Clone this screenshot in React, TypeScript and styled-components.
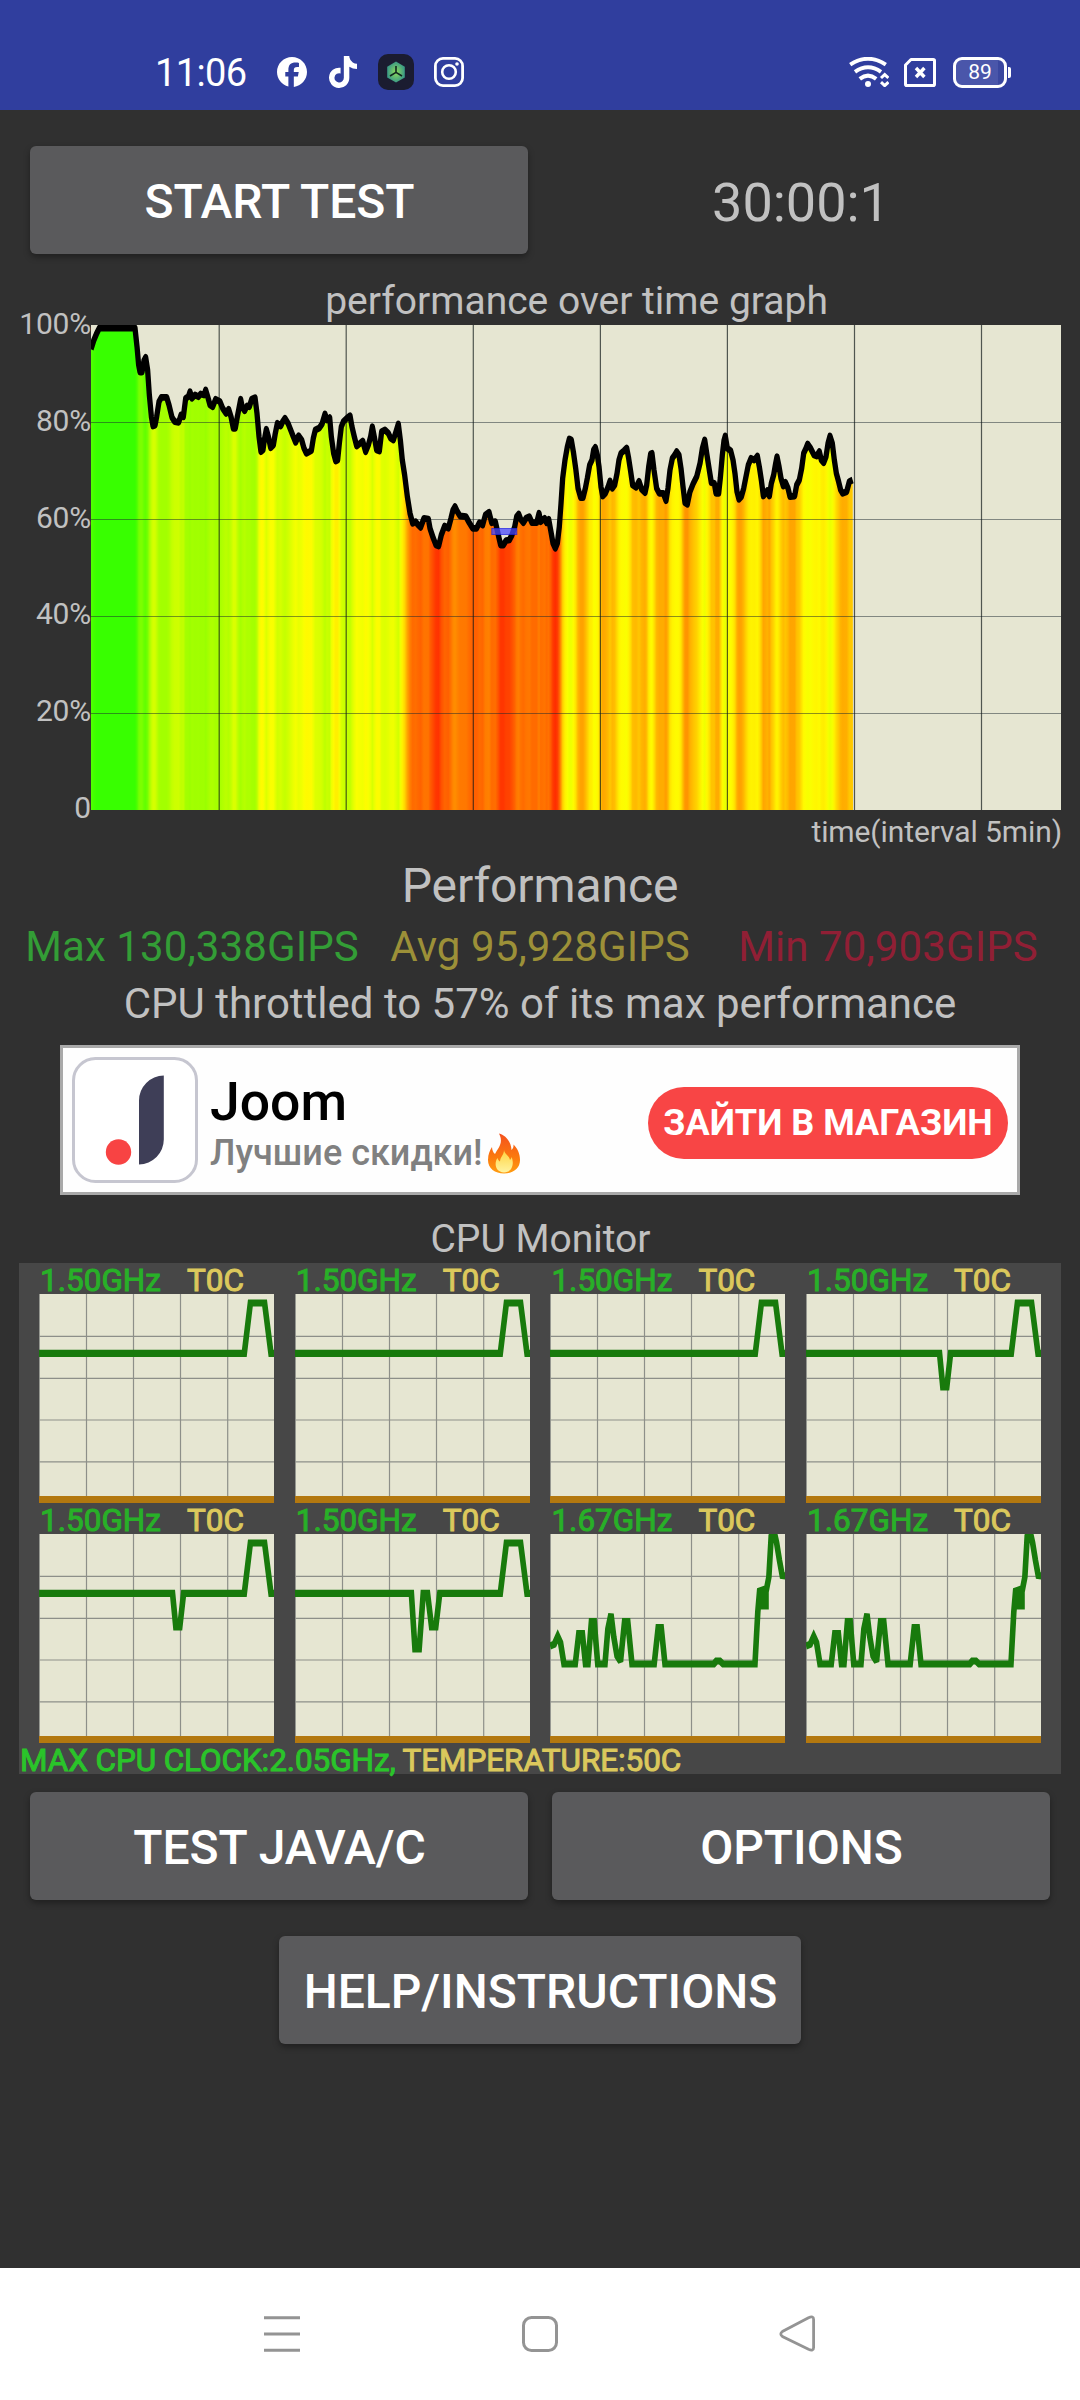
import React from "react";
import styled, { createGlobalStyle } from "styled-components";
import { FaFacebook, FaTiktok } from "react-icons/fa6";

type Point = [number, number];

const GlobalStyle = createGlobalStyle`
  body {
    margin: 0;
    background: #303030;
    font-family: Roboto, "Noto Sans", sans-serif;
  }
`;

const Screen = styled.div`
  display: flex;
  flex-direction: column;
  width: 1080px;
  height: 2400px;
  overflow: hidden;
  background: #303030;
  color: #c1c1c1;
`;

/* ---------- status bar ---------- */

const StatusBar = styled.header`
  display: flex;
  align-items: center;
  justify-content: space-between;
  box-sizing: border-box;
  height: 110px;
  padding: 34px 69px 0 155px;
  background: #303e9e;
  color: #fff;
`;

const StatusGroup = styled.div<{ $gap: number }>`
  display: flex;
  align-items: center;
  gap: ${(p) => p.$gap}px;
  svg {
    display: block;
  }
`;

const Clock = styled.span`
  width: 102px;
  padding-top: 1px;
  font-size: 38px;
  line-height: 44px;
  letter-spacing: -0.6px;
  white-space: nowrap;
`;

const Battery = styled.div`
  display: flex;
  align-items: center;
  gap: 1px;
  margin-left: 2px;
`;

const BatteryBody = styled.div`
  box-sizing: border-box;
  width: 54px;
  height: 31px;
  border: 3px solid #fff;
  border-radius: 9px;
  background: linear-gradient(90deg, #4a56aa 88%, #3a479f 88%);
  font-size: 21px;
  line-height: 25px;
  text-align: center;
`;

const BatteryTip = styled.div`
  width: 3px;
  height: 11px;
  border-radius: 0 2px 2px 0;
  background: #fff;
`;

/* ---------- controls ---------- */

const ButtonRow = styled.div<{ $top: number }>`
  display: grid;
  grid-template-columns: 498px 498px;
  column-gap: 24px;
  justify-content: center;
  margin-top: ${(p) => p.$top}px;
`;

const Button = styled.button<{ $width?: number }>`
  width: ${(p) => p.$width ?? 498}px;
  height: 108px;
  padding: 4px 0 0 1px;
  border: 0;
  border-radius: 6px;
  background: #5a5a5c;
  box-shadow: 0 3px 6px rgba(0, 0, 0, 0.35);
  color: #fff;
  font: 500 48px/56px Roboto, sans-serif;
`;

const Timer = styled.div`
  padding-top: 5px;
  font-size: 54px;
  line-height: 103px;
  text-align: center;
`;

const CenterRow = styled.div`
  display: flex;
  justify-content: center;
  margin-top: 36px;
`;

/* ---------- performance graph ---------- */

const GraphTitle = styled.h2`
  height: 47px;
  margin: 24px 18px 0 91px;
  font-size: 39px;
  font-weight: 400;
  line-height: 46px;
  text-align: center;
`;

const GraphRow = styled.div`
  display: grid;
  grid-template-columns: 91px 970px;
  height: 485px;
`;

const AxisLabels = styled.div`
  display: flex;
  flex-direction: column;
  justify-content: space-between;
  height: 520px;
  margin-top: -19px;
  font-size: 30px;
  line-height: 36px;
  letter-spacing: -0.2px;
  text-align: right;
`;

const GraphSvg = styled.svg`
  display: block;
  width: 970px;
  height: 485px;
  background: #e6e6d2;
`;

const TimeCaption = styled.div`
  height: 44px;
  padding: 4px 18px 0 0;
  font-size: 30px;
  line-height: 36px;
  letter-spacing: -0.1px;
  text-align: right;
`;

/* ---------- results ---------- */

const ResultTitle = styled.h2`
  height: 64px;
  margin: 0;
  font-size: 48px;
  font-weight: 400;
  line-height: 56px;
  letter-spacing: -0.1px;
  text-align: center;
`;

const Scores = styled.div`
  display: grid;
  grid-template-columns: repeat(3, 348px);
  justify-content: center;
  height: 57px;
`;

const Score = styled.span<{ $color: string }>`
  color: ${(p) => p.$color};
  font-size: 42px;
  line-height: 49px;
  letter-spacing: 0.1px;
  text-align: center;
  white-space: nowrap;
`;

const ThrottleNote = styled.p`
  height: 66px;
  margin: 0;
  font-size: 42px;
  line-height: 49px;
  text-align: center;
`;

/* ---------- ad banner ---------- */

const Banner = styled.section`
  display: flex;
  align-items: center;
  box-sizing: border-box;
  width: 960px;
  height: 150px;
  margin: 0 auto;
  padding: 0 9px;
  border: 3px solid #a9a9a9;
  background: #fefefe;
`;

const BannerText = styled.div`
  flex: 1;
  margin-left: 12px;
  padding-top: 7px;
`;

const BannerTitle = styled.div`
  color: #000;
  font-size: 53.5px;
  font-weight: 500;
  line-height: 59px;
`;

const BannerSub = styled.div`
  display: flex;
  align-items: center;
  gap: 4px;
  height: 44px;
  color: #808080;
  font-size: 36px;
  font-weight: 500;
  line-height: 44px;
`;

const BannerAction = styled.div`
  width: 360px;
  height: 72px;
  margin-top: 5px;
  border-radius: 36px;
  background: #f84545;
  color: #fff;
  font-size: 36px;
  font-weight: 700;
  line-height: 73px;
  text-align: center;
  white-space: nowrap;
`;

/* ---------- cpu monitor ---------- */

const MonitorTitle = styled.h2`
  height: 47px;
  margin: 21px 0 0;
  padding-left: 1px;
  font-size: 39px;
  font-weight: 400;
  line-height: 46px;
  text-align: center;
`;

const MonitorPanel = styled.section`
  align-self: center;
  width: 1042px;
  height: 511px;
  background: #474747;
`;

const CoreGrid = styled.div`
  display: grid;
  grid-template-columns: repeat(4, 235px);
  grid-auto-rows: 240px;
  column-gap: 20.7px;
  padding-left: 20px;
`;

const CoreLabel = styled.div`
  display: grid;
  grid-template-columns: 147px auto;
  height: 31px;
  padding-left: 1px;
  font-size: 31.5px;
  line-height: 35px;
  white-space: nowrap;
`;

const Freq = styled.span<{ $bright?: boolean }>`
  color: ${(p) => (p.$bright ? "#2ac42a" : "#28b028")};
  -webkit-text-stroke: 1px currentColor;
`;

const Temp = styled.span`
  color: #dbc85c;
  -webkit-text-stroke: 1px currentColor;
`;

const CoreSvg = styled.svg`
  display: block;
  width: 235px;
  height: 209px;
  background: #e6e6d2;
`;

const MonitorFooter = styled.div`
  height: 31px;
  padding-left: 1px;
  font-size: 31.5px;
  line-height: 35px;
  letter-spacing: -0.1px;
  white-space: pre;
`;

/* ---------- navigation bar ---------- */

const NavBar = styled.nav`
  display: flex;
  align-items: center;
  justify-content: center;
  gap: 218px;
  height: 132px;
  margin-top: auto;
  background: #fff;
`;

/* Performance samples, in graph pixels (970 x 485). */
const shift = (pts: Point[], dx: number, dy: number): Point[] =>
  pts.map(([x, y]) => [x / 3 + dx, y / 3 + dy]);

const SAMPLES: Point[] = [
  ...shift(
    [
      [273, 238], [281, 212], [290, 190], [298, 174], [405, 174], [411, 230], [416, 285], [420, 306],
      [426, 306], [432, 272], [437, 262], [443, 300], [448, 375], [454, 440], [459, 468], [465, 466],
      [470, 440], [477, 395], [484, 382], [500, 382], [507, 405], [516, 442], [524, 455], [536, 457],
      [543, 435], [550, 440], [557, 385], [565, 380], [570, 365], [576, 385], [585, 375], [595, 380],
      [602, 372], [612, 375], [617, 360], [623, 380], [630, 405], [638, 410], [647, 388], [660, 395],
      [668, 415], [678, 430], [686, 418], [693, 440], [700, 475], [706, 475], [712, 440], [717, 415],
      [722, 388], [727, 412], [734, 422], [741, 408], [748, 410], [755, 388], [765, 383], [771, 430],
      [777, 500], [783, 545], [789, 540], [793, 510], [799, 478], [805, 500], [812, 533], [820, 525],
      [826, 490], [832, 460], [842, 468], [848, 455], [855, 445], [864, 460], [873, 482], [880, 500],
      [887, 517], [896, 497], [905, 510], [912, 535], [919, 550], [934, 542], [940, 505], [946, 480],
      [958, 474], [966, 462], [975, 432], [981, 450], [989, 443], [994, 500], [1001, 550], [1007, 573],
      [1013, 570], [1018, 520], [1024, 470], [1030, 455], [1040, 445], [1050, 437], [1056, 470],
      [1063, 500], [1070, 528], [1080, 520], [1088, 513], [1097, 545], [1105, 525], [1112, 500],
      [1117, 470], [1123, 500], [1130, 540], [1138, 543], [1145, 485], [1155, 480], [1165, 490],
      [1172, 505], [1180, 510], [1188, 485], [1195, 462], [1201, 510], [1207, 570], [1214, 615],
      [1222, 680], [1230, 730], [1238, 760], [1247, 755],
    ],
    -91,
    -55,
  ),
  ...shift(
    [
      [112, 372], [122, 382], [132, 355], [145, 357], [150, 385], [160, 415], [168, 435], [176, 438],
      [184, 405], [194, 378], [205, 385], [213, 355], [219, 330], [225, 320], [232, 335], [240, 348],
      [258, 350], [268, 368], [278, 385], [290, 385], [298, 368], [308, 375], [316, 345], [327, 337],
      [335, 368], [346, 365], [355, 405], [362, 435], [370, 435], [378, 422], [388, 420], [396, 405],
      [404, 380], [410, 350], [416, 342], [422, 358], [430, 368], [438, 355], [448, 350], [456, 368],
      [470, 368], [477, 340], [482, 365], [494, 355], [500, 368], [506, 358], [512, 390], [519, 430],
      [526, 445], [532, 430], [538, 380], [543, 310], [548, 235], [555, 180], [562, 140], [568, 117],
      [574, 120], [580, 155], [587, 205], [594, 265], [602, 293], [609, 293], [616, 265], [622, 235],
      [629, 195], [636, 180], [641, 150], [646, 142], [652, 165], [657, 200], [663, 260], [668, 288],
      [676, 280], [684, 262], [690, 243], [697, 265], [704, 255], [711, 220], [717, 180], [723, 160],
      [732, 152], [740, 144], [746, 175], [752, 215], [758, 255], [768, 262], [777, 244], [785, 268],
      [795, 278], [800, 255], [806, 200], [812, 162], [816, 160], [822, 210], [830, 265], [838, 280],
      [850, 280], [858, 302], [864, 265], [870, 210], [877, 175], [884, 165], [890, 155], [897, 165],
      [903, 205], [909, 260], [915, 308], [922, 313], [930, 275], [940, 250], [950, 230], [960, 190],
      [967, 145], [974, 120], [981, 165], [988, 210], [994, 248], [1003, 250], [1008, 280], [1016, 280],
      [1021, 235], [1027, 165], [1032, 122], [1036, 108], [1042, 145], [1052, 152], [1059, 180],
      [1065, 220], [1071, 275], [1077, 298], [1084, 290], [1091, 265], [1098, 230], [1105, 195],
      [1113, 175], [1123, 180], [1132, 168], [1138, 200], [1144, 240], [1150, 288], [1157, 280],
      [1162, 272], [1168, 288], [1174, 250], [1181, 225], [1187, 190], [1191, 170], [1197, 200],
      [1203, 235], [1210, 258], [1216, 247], [1224, 265], [1230, 290], [1244, 288], [1250, 255],
      [1258, 240], [1265, 205], [1271, 160], [1278, 145], [1283, 132], [1292, 145], [1302, 165],
      [1310, 168], [1318, 155], [1324, 180], [1331, 188], [1338, 170], [1344, 130], [1350, 108],
      [1357, 130], [1363, 180], [1369, 220], [1376, 245], [1382, 270], [1388, 280], [1400, 275],
      [1408, 245], [1418, 240],
    ],
    289,
    75,
  ),
];

/* Heat scale: percentage to colour. */
const HEAT: [number, number, number][] = [
  [54, 255, 45],
  [57, 255, 85],
  [60.5, 255, 120],
  [64, 255, 158],
  [67, 255, 190],
  [70, 255, 225],
  [73.5, 255, 250],
  [75, 250, 255],
  [77, 235, 255],
  [80, 205, 255],
  [83, 175, 255],
  [86, 158, 255],
  [92, 110, 255],
  [98, 56, 255],
];

const heat = (pct: number) => {
  if (pct <= HEAT[0][0]) return "rgb(255,45,0)";
  for (let i = 1; i < HEAT.length; i++) {
    const [p1, r1, g1] = HEAT[i];
    if (pct <= p1) {
      const [p0, r0, g0] = HEAT[i - 1];
      const t = (pct - p0) / (p1 - p0);
      return `rgb(${Math.round(r0 + (r1 - r0) * t)},${Math.round(g0 + (g1 - g0) * t)},0)`;
    }
  }
  return "rgb(56,255,0)";
};

const toPoints = (pts: Point[], sx = 1) => pts.map(([x, y]) => `${(x / sx).toFixed(1)},${y.toFixed(1)}`).join(" ");

/* Horizontal squeeze of the pen: strokes are taller than they are wide. */
const PEN = 0.78;
const LAST_X = 762;

const PerformanceGraph = () => (
  <GraphSvg viewBox="0 0 970 485">
    <defs>
      <linearGradient id="heat" gradientUnits="userSpaceOnUse" x1="0" y1="0" x2={LAST_X} y2="0">
        {SAMPLES.map(([x, y], i) => (
          <stop key={i} offset={x / LAST_X} stopColor={heat(((485 - y) / 485) * 100)} />
        ))}
      </linearGradient>
    </defs>
    <polygon points={`0,485 ${toPoints(SAMPLES)} ${LAST_X},485`} fill="url(#heat)" />
    {[97.5, 194.5, 291.5, 388.5].map((y) => (
      <line key={y} x1="0" x2="970" y1={y} y2={y} stroke="#1c2830" strokeOpacity="0.5" strokeWidth="1.2" />
    ))}
    {[128.2, 255.2, 382.3, 509.4, 636.4, 763.5, 890.5].map((x) => (
      <line key={x} x1={x} x2={x} y1="0" y2="485" stroke="#101818" strokeOpacity="0.7" strokeWidth="1.2" />
    ))}
    <polyline
      transform={`scale(${PEN} 1)`}
      points={toPoints(SAMPLES, PEN)}
      fill="none"
      stroke="#000"
      strokeWidth="6.8"
      strokeLinejoin="round"
    />
    <rect x="400.8" y="203.5" width="25" height="6" fill="#4a4aff" fillOpacity="0.75" stroke="#2020e0" strokeOpacity="0.7" />
  </GraphSvg>
);

/* ---------- core traces, in chart pixels (235 x 209) ---------- */

const PEAK: Point[] = [[205.3, 59.3], [211.4, 9], [225.6, 9], [232, 59.3], [236, 59.3]];
const DIP: Point[] = [[133.5, 59.3], [136.8, 93], [140.8, 93], [144.6, 59.3]];

const STEADY: Point[] = [[0, 59.3], ...PEAK];
const ONE_DIP: Point[] = [[0, 59.3], ...DIP, ...PEAK];
const TWO_DIPS: Point[] = [
  [0, 59.3], [116.4, 59.3], [120, 115], [124.2, 115], [128.2, 59.3], [132.5, 59.3],
  [136.6, 93], [140.8, 93], [144.8, 59.3], ...PEAK,
];
const BIG_CORE: Point[] = [
  [0, 112], [4.2, 110.3], [7.7, 102.5], [10.5, 108.6], [14, 130], [25.3, 130], [28.8, 99.5], [32.4, 99.5],
  [35.5, 130], [38, 130], [41.4, 87.5], [44.2, 87.5], [47.7, 130], [55, 130], [57.9, 94.8], [61, 80],
  [63.8, 103], [67, 122], [70.5, 127.5], [74.6, 87.5], [77.8, 87.5], [82, 130], [104.2, 130], [108.2, 93.5],
  [111.2, 93.5], [115, 130], [163.8, 130], [166.3, 127], [170, 127], [173, 130], [205, 130], [207.8, 78],
  [209.6, 57], [212.5, 56], [212.5, 72], [216, 72], [216, 58], [218.9, 43], [221.2, 2], [224, -3],
  [226.6, 8.7], [229.4, 26], [232.2, 41.4], [236, 42],
];

const CORES = [
  { freq: "1.50GHz", trace: STEADY },
  { freq: "1.50GHz", trace: STEADY },
  { freq: "1.50GHz", trace: STEADY },
  { freq: "1.50GHz", trace: ONE_DIP },
  { freq: "1.50GHz", trace: ONE_DIP },
  { freq: "1.50GHz", trace: TWO_DIPS },
  { freq: "1.67GHz", trace: BIG_CORE },
  { freq: "1.67GHz", trace: BIG_CORE },
];

const CoreChart = ({ trace }: { trace: Point[] }) => (
  <CoreSvg viewBox="0 0 235 209">
    {[0.3, 47.5, 94.5, 141.5, 188.7].map((x) => (
      <line key={x} x1={x} x2={x} y1="0" y2="209" stroke="#8d8f89" strokeWidth="1.2" />
    ))}
    {[42.4, 84.4, 126, 167.8].map((y) => (
      <line key={y} x1="0" x2="235" y1={y} y2={y} stroke="#8d8f89" strokeWidth="1.2" />
    ))}
    <rect y="202" width="235" height="7" fill="#b3780f" />
    <polyline
      transform={`scale(${PEN} 1)`}
      points={toPoints(trace, PEN)}
      fill="none"
      stroke="#187a0c"
      strokeWidth="7.2"
      strokeLinejoin="miter"
      strokeMiterlimit="2"
    />
  </CoreSvg>
);

/* ---------- icons ---------- */

const AppBadge = () => (
  <svg width="36" height="36" viewBox="0 0 36 36">
    <defs>
      <radialGradient id="hex">
        <stop offset="0" stopColor="#8fdc5a" />
        <stop offset="1" stopColor="#3a9a86" />
      </radialGradient>
    </defs>
    <rect width="36" height="36" rx="10" fill="#1b1c30" />
    <path d="M18 7.6 26.8 12.8V23.4L18 28.6 9.2 23.4V12.8Z" fill="url(#hex)" />
    <path d="M18 12v6.6M18 18.4l-6 3.6M18 18.4l6 3.6" stroke="#10251e" strokeWidth="1.6" fill="none" />
  </svg>
);

const InstagramIcon = () => (
  <svg width="30" height="30" viewBox="0 0 30 30" fill="none" stroke="#fff">
    <rect x="1.4" y="1.4" width="27.2" height="27.2" rx="7.6" strokeWidth="2.8" />
    <circle cx="15" cy="15" r="6.8" strokeWidth="2.6" />
    <circle cx="23" cy="7" r="1.8" fill="#fff" stroke="none" />
  </svg>
);

const WifiIcon = () => (
  <svg width="40" height="30" viewBox="0 0 40 30" fill="none" stroke="#fff">
    <path d="M1.2 7.6Q19 -4 36.8 7.6" strokeWidth="4" />
    <path d="M6 14.8Q19 5.8 32 14.8" strokeWidth="4" />
    <path d="M10.8 21.8Q19 15.4 27.2 21.8" strokeWidth="4" />
    <circle cx="19" cy="27" r="3" fill="#fff" stroke="none" />
    <path d="M32 21 35.7 17.6 39.4 21M32 25.2 35.7 28.6 39.4 25.2" strokeWidth="3" />
  </svg>
);

const SimIcon = () => (
  <svg width="32" height="29" viewBox="0 0 32 29" fill="none" stroke="#fff">
    <path d="M7 1.5H29.2Q30.5 1.5 30.5 2.8V26.200Q30.5 27.500 29.2 27.500H2.8Q1.500 27.500 1.500 26.200V7Z" strokeWidth="3" strokeLinejoin="round" />
    <path d="M12 10 20.4 19M20.4 10 12 19" strokeWidth="3.4" />
  </svg>
);

const JoomLogo = () => (
  <svg width="126" height="126" viewBox="0 0 126 126">
    <rect x="1.5" y="1.5" width="123" height="123" rx="22" fill="#fff" stroke="#c6c6d0" strokeWidth="3" />
    <path d="M91.8 18.5V82.500A25 25 0 0 1 67 107.500V43.500A25 25 0 0 1 91.800 18.500Z" fill="#3e3e57" />
    <circle cx="46.500" cy="95" r="12.700" fill="#f84343" />
  </svg>
);

const Flame = () => (
  <svg width="34" height="41" viewBox="0 0 34 41">
    <defs>
      <linearGradient id="flame" x1="0" y1="0" x2="0" y2="1">
        <stop offset="0" stopColor="#f4511e" />
        <stop offset="0.6" stopColor="#fb7a0e" />
        <stop offset="1" stopColor="#ff9d12" />
      </linearGradient>
      <linearGradient id="core" x1="0" y1="0" x2="0" y2="1">
        <stop offset="0" stopColor="#ffd23e" />
        <stop offset="1" stopColor="#fff3a0" />
      </linearGradient>
    </defs>
    <path
      d="M12 0.500C18 2 24 8 24.500 17C26 16 26.700 14 26.500 11.500C31 16 33 21 33 27C33 35.500 26 40.500 17 40.500C8 40.500 1 35.500 1 27C1 21 3 17 5 14C5.200 17 6 19.500 8 21C11 15 17 10 12 0.500Z"
      fill="url(#flame)"
    />
    <path
      d="M17 17C18 22 22 22 23 27C24 26 24.500 25 24.500 24C27 29 26.500 39 17 39.500C8 39 7 30 10.500 25C11 27 12 28 13 28.500C13 24 17 22 17 17Z"
      fill="url(#core)"
    />
  </svg>
);

const MenuIcon = () => (
  <svg width="40" height="40" viewBox="0 0 40 40" stroke="#949494" strokeWidth="3" strokeLinecap="square">
    <path d="M3.500 3.700H36.500M3.500 20H36.500M3.500 36.300H36.500" />
  </svg>
);

const HomeIcon = () => (
  <svg width="40" height="40" viewBox="0 0 40 40" fill="none" stroke="#949494" strokeWidth="3">
    <rect x="3.500" y="3.500" width="33" height="33" rx="8" />
  </svg>
);

const BackIcon = () => (
  <svg width="40" height="40" viewBox="0 0 40 40" fill="none" stroke="#949494" strokeWidth="2.800">
    <path d="M30.500 3.700 4.400 17.500Q1.200 20 4.400 22.500L30.500 35.300Q35.600 37.600 35.600 33.500V5.500Q35.600 1.400 30.500 3.700Z" />
  </svg>
);

export default function App() {
  return (
    <>
      <GlobalStyle />
      <Screen>
        <StatusBar>
          <StatusGroup $gap={20}>
            <Clock>11:06</Clock>
            <StatusGroup $gap={19.5}>
              <FaFacebook size={30} />
              <FaTiktok size={32} />
              <AppBadge />
              <InstagramIcon />
            </StatusGroup>
          </StatusGroup>
          <StatusGroup $gap={15}>
            <WifiIcon />
            <SimIcon />
            <Battery>
              <BatteryBody>89</BatteryBody>
              <BatteryTip />
            </Battery>
          </StatusGroup>
        </StatusBar>

        <ButtonRow $top={36}>
          <Button>START TEST</Button>
          <Timer>30:00:1</Timer>
        </ButtonRow>

        <GraphTitle>performance over time graph</GraphTitle>
        <GraphRow>
          <AxisLabels>
            <span>100%</span>
            <span>80%</span>
            <span>60%</span>
            <span>40%</span>
            <span>20%</span>
            <span>0</span>
          </AxisLabels>
          <PerformanceGraph />
        </GraphRow>
        <TimeCaption>time(interval 5min)</TimeCaption>

        <ResultTitle>Performance</ResultTitle>
        <Scores>
          <Score $color="#339d36">Max 130,338GIPS</Score>
          <Score $color="#9c9038">Avg 95,928GIPS</Score>
          <Score $color="#901f35">Min 70,903GIPS</Score>
        </Scores>
        <ThrottleNote>CPU throttled to 57% of its max performance</ThrottleNote>

        <Banner>
          <JoomLogo />
          <BannerText>
            <BannerTitle>Joom</BannerTitle>
            <BannerSub>
              Лучшие скидки!
              <Flame />
            </BannerSub>
          </BannerText>
          <BannerAction>ЗАЙТИ В МАГАЗИН</BannerAction>
        </Banner>

        <MonitorTitle>CPU Monitor</MonitorTitle>
        <MonitorPanel>
          <CoreGrid>
            {CORES.map((core, i) => (
              <div key={i}>
                <CoreLabel>
                  <Freq>{core.freq}</Freq>
                  <Temp>T0C</Temp>
                </CoreLabel>
                <CoreChart trace={core.trace} />
              </div>
            ))}
          </CoreGrid>
          <MonitorFooter>
            <Freq $bright>MAX CPU CLOCK:2.05GHz, </Freq>
            <Temp>TEMPERATURE:50C</Temp>
          </MonitorFooter>
        </MonitorPanel>

        <ButtonRow $top={18}>
          <Button>TEST JAVA/C</Button>
          <Button>OPTIONS</Button>
        </ButtonRow>
        <CenterRow>
          <Button $width={522}>HELP/INSTRUCTIONS</Button>
        </CenterRow>

        <NavBar>
          <MenuIcon />
          <HomeIcon />
          <BackIcon />
        </NavBar>
      </Screen>
    </>
  );
}
